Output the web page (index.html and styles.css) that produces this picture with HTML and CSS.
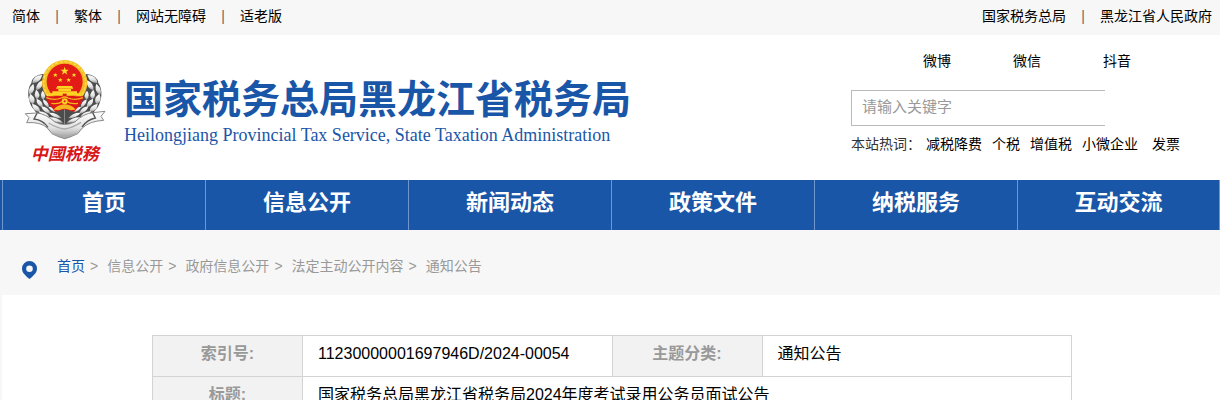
FILE: index.html
```html
<!DOCTYPE html>
<html lang="zh-CN">
<head>
    <meta charset="UTF-8">
    <meta name="viewport" content="width=device-width, initial-scale=1.0">
    <title>国家税务总局黑龙江省税务局</title>
    <link rel="stylesheet" href="styles.css">
</head>
<body>
    <div class="topbar">
        <ul class="top-links">
            <li><a href="#">简体</a></li>
            <li><a href="#">繁体</a></li>
            <li><a href="#">网站无障碍</a></li>
            <li><a href="#">适老版</a></li>
        </ul>
        <ul class="top-links">
            <li><a href="#">国家税务总局</a></li>
            <li><a href="#">黑龙江省人民政府</a></li>
        </ul>
    </div>

    <header class="header">
        <a class="brand" href="#">
            <svg class="emblem" viewBox="0 0 300 375" aria-hidden="true">
                <defs>
                    <linearGradient id="silver" x1="0" y1="0" x2="0" y2="1">
                        <stop offset="0" stop-color="#fff"/>
                        <stop offset="0.6" stop-color="#e2e2e2"/>
                        <stop offset="1" stop-color="#999"/>
                    </linearGradient>
                    <g id="wheat">
                        <path d="M84 72Q52 76 49 99Q38 115 40 138Q44 166 56 178Q76 210 149 226V100Z" fill="#4c4c4c"/>
                        <g fill="url(#silver)">
                            <path d="M82 75Q55 75 52 99Q74 101 82 75Z"/>
                            <path d="M55 101Q36 118 43 134Q64 124 55 101Z"/>
                            <path d="M46 131Q36 151 53 163Q68 148 46 131Z"/>
                            <path d="M51 161Q52 183 75 186Q76 166 51 161Z"/>
                            <path d="M71 184Q78 205 104 204Q97 184 71 184Z"/>
                            <path d="M99 202Q113 219 144 219Q129 200 99 202Z"/>
                            <path d="M83 91Q60 101 64 121Q86 114 83 91Z"/>
                            <path d="M64 119Q53 136 66 148Q82 136 64 119Z"/>
                            <path d="M65 146Q63 165 82 172Q86 153 65 146Z"/>
                            <path d="M79 169Q84 188 105 191Q102 171 79 169Z"/>
                            <path d="M102 188Q113 204 139 205Q127 187 102 188Z"/>
                            <path d="M83 122Q72 136 84 149Q97 137 83 122Z"/>
                            <path d="M84 148Q84 166 101 173Q103 155 84 148Z"/>
                            <path d="M100 170Q107 184 125 187Q119 171 100 170Z"/>
                        </g>
                    </g>
                </defs>
                <use href="#wheat"/>
                <use href="#wheat" transform="matrix(-1 0 0 1 299 0)"/>
                <circle cx="149" cy="98" r="68" fill="#f5bd25"/>
                <circle cx="149" cy="98" r="63" fill="none" stroke="#fbdc4c" stroke-width="4" stroke-dasharray="9 5"/>
                <circle cx="149" cy="95" r="54" fill="#e31b16"/>
                <path d="M149 50l3 9h9l-7 6 3 9-8-6-8 6 3-9-7-6h9z" fill="#ffdd24"/>
                <path id="star" d="M121 69l2 4h5l-4 3 2 5-5-3-5 3 2-5-4-3h5z" fill="#ffdd24"/>
                <use href="#star" x="56"/>
                <use href="#star" x="15" y="15"/>
                <use href="#star" x="40" y="15"/>
                <path d="M127 108h44l4 8h-52zM130 117h38v6h-38zM112 124h74v13h-74zM101 130h15v7h-15zM183 130h15v7h-15z" fill="#ffd321"/>
                <path d="M143 131h12v7h-12z" fill="#d9201a"/>
                <path d="M93 139H205Q203 161 189 171L177 186L149 178L121 186L109 171Q95 161 93 139Z" fill="#db1717"/>
                <path d="M94 143Q117 153 139 144Q149 138 159 144Q181 153 204 143M109 160Q132 163 141 155M189 160Q166 163 157 155" fill="none" stroke="#f6b51e" stroke-width="4"/>
                <path d="M116 179Q128 164 149 163Q170 164 182 179L167 181Q149 171 131 181Z" fill="#f6b51e"/>
                <circle cx="149" cy="154" r="9" fill="#ffcf25"/>
                <circle cx="149" cy="154" r="3" fill="#dd1b17"/>
                <path d="M31 191L66 189Q91 191 120 216Q149 231 179 216Q207 190 233 188L270 184L258 199L266 211Q224 213 202 234L188 251Q168 261 149 266Q130 261 111 251L97 234Q77 215 35 218L42 203Z" fill="url(#silver)" stroke="#888" stroke-width="3"/>
                <path d="M66 190L57 207Q84 210 99 232M233 188L241 204Q216 209 201 231" fill="none" stroke="#555" stroke-width="4"/>
                <path d="M101 219Q127 235 149 237Q173 233 198 217M111 250Q135 256 149 261Q166 256 188 250" fill="none" stroke="#aaa" stroke-width="4"/>
                <text class="emblem-text" x="47" y="330">中國税務</text>
            </svg>
            <span class="brand-names">
                <span class="brand-cn">国家税务总局黑龙江省税务局</span>
                <span class="brand-en">Heilongjiang Provincial Tax Service, State Taxation Administration</span>
            </span>
        </a>
        <div class="tools">
            <div class="social">
                <a href="#">微博</a>
                <a href="#">微信</a>
                <a href="#">抖音</a>
            </div>
            <input class="search" type="text" placeholder="请输入关键字" aria-label="请输入关键字">
            <div class="hot">
                <span class="hot-label">本站热词：</span>
                <a href="#">减税降费</a>
                <a href="#">个税</a>
                <a href="#">增值税</a>
                <a href="#">小微企业</a>
                <a href="#">发票</a>
            </div>
        </div>
    </header>

    <nav class="nav">
        <a href="#">首页</a>
        <a href="#">信息公开</a>
        <a href="#">新闻动态</a>
        <a href="#">政策文件</a>
        <a href="#">纳税服务</a>
        <a href="#">互动交流</a>
    </nav>

    <div class="crumbs">
        <svg class="pin" viewBox="0 0 15 18" aria-hidden="true">
            <path fill-rule="evenodd" d="M7.500 0A7.500 7.500 0 0 0 0 7.500C0 11 2 13.500 7.500 18C13 13.500 15 11 15 7.500A7.500 7.500 0 0 0 7.500 0ZM7.500 4.500A3.300 3.300 0 1 1 7.500 11.100A3.300 3.300 0 1 1 7.500 4.500Z"/>
        </svg>
        <a class="home" href="#">首页</a>
        <a href="#">信息公开</a>
        <a href="#">政府信息公开</a>
        <a href="#">法定主动公开内容</a>
        <a href="#">通知公告</a>
    </div>

    <main class="panel">
        <table class="info">
            <colgroup>
                <col class="col-name">
                <col>
                <col class="col-name">
                <col>
            </colgroup>
            <tr>
                <th>索引号:</th>
                <td>11230000001697946D/2024-00054</td>
                <th>主题分类:</th>
                <td>通知公告</td>
            </tr>
            <tr>
                <th>标题:</th>
                <td colspan="3">国家税务总局黑龙江省税务局2024年度考试录用公务员面试公告</td>
            </tr>
        </table>
    </main>
</body>
</html>
```
FILE: styles.css
```css
* {
    box-sizing: border-box;
}
body {
    margin: 0;
    background: #f7f7f7;
    color: #000;
    font-family: "Liberation Sans", "Noto Sans CJK SC", sans-serif;
    font-size: 14px;
    line-height: 20px;
}
a {
    color: inherit;
    text-decoration: none;
}
.topbar {
    display: flex;
    justify-content: space-between;
    padding: 6px 8px 9px 12px;
}
.top-links {
    display: flex;
    margin: 0;
    padding: 0;
    list-style: none;
}
.top-links li + li::before {
    content: "|";
    display: inline-block;
    width: 34px;
    color: #666;
    text-align: center;
}
.header {
    display: flex;
    justify-content: space-between;
    height: 145px;
    padding-right: 40px;
    background: #fff;
}
.brand {
    display: flex;
    padding: 15px 0 0 15px;
    color: #1a56a8;
}
.emblem {
    width: 100px;
    height: 125px;
}
.emblem-text {
    fill: #d71718;
    font-family: "Noto Sans CJK SC", sans-serif;
    font-size: 51px;
    font-style: italic;
    font-weight: bold;
}
.brand-names {
    display: flex;
    flex-direction: column;
    padding: 28px 0 0 9px;
}
.brand-cn {
    font-size: 39px;
    font-weight: bold;
    line-height: 44px;
    white-space: nowrap;
}
.brand-en {
    font-family: "Liberation Serif", serif;
    font-size: 18px;
    line-height: 26px;
    white-space: nowrap;
}
.tools {
    padding-top: 16px;
}
.social {
    display: flex;
    padding-left: 41px;
}
.social a {
    width: 90px;
    text-align: center;
}
.search {
    display: block;
    width: 254px;
    height: 36px;
    margin: 19px 0 8px;
    padding: 0 10px 3px;
    border: 1px solid #bbb;
    border-right: 0;
    background: #fff;
    font-family: inherit;
    font-size: 15px;
}
.search::placeholder {
    color: #999;
}
.hot {
    display: flex;
    gap: 10px;
    white-space: nowrap;
}
.hot-label {
    margin-right: -5px;
    color: #333;
}
.hot a:last-child {
    margin-left: 4px;
}
.nav {
    display: grid;
    grid-template-columns: repeat(6, 1fr);
    padding-left: 2px;
    background: #1a56a8;
}
.nav a {
    padding: 7px 0 11px;
    border-left: 1px solid #6f97cd;
    color: #fff;
    font-size: 22px;
    font-weight: bold;
    line-height: 32px;
    text-align: center;
}
.nav a:last-child {
    border-right: 1px solid #6f97cd;
}
.crumbs {
    display: flex;
    align-items: flex-start;
    padding: 26px 22px 16px;
    color: #999;
}
.pin {
    width: 15px;
    height: 18px;
    margin: 5px 20px 0 0;
    fill: #1a56a8;
}
.crumbs .home {
    color: #1a56a8;
}
.crumbs a + a::before {
    content: ">";
    margin: 0 9px 0 5px;
    color: #999;
}
.panel {
    margin-left: 2px;
    padding: 40px 18px 0 20px;
    background: #fff;
}
.info {
    width: 100%;
    max-width: 920px;
    margin: 0 auto;
    border-collapse: collapse;
    table-layout: fixed;
    font-size: 16px;
}
.col-name {
    width: 150px;
}
.info th,
.info td {
    padding: 6px 15px 10px;
    border: 1px solid #d3d3d3;
    line-height: 24px;
}
.info th {
    background: #f2f2f2;
    color: #999;
}
.info td {
    text-align: left;
}
```
